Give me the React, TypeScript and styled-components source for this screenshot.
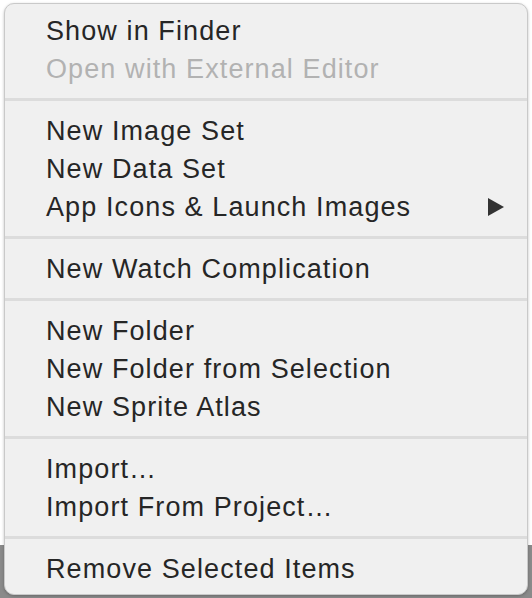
import React from "react";
import styled, { createGlobalStyle } from "styled-components";

const GlobalStyle = createGlobalStyle`
  html, body {
    margin: 0;
    padding: 0;
  }
  body {
    width: 532px;
    height: 598px;
    overflow: hidden;
    background: linear-gradient(to bottom, #ffffff 0, #ffffff 545px, #8a8a8a 545px, #8a8a8a 100%);
    font-family: "Liberation Sans", Arial, sans-serif;
  }
`;

const Page = styled.div`
  padding: 3px 4px 3px 4px;
  height: 592px;
`;

const Menu = styled.div`
  background: #f0f0f0;
  border-radius: 10px;
  border: 1px solid #c9c9c9;
  box-shadow: 0 1px 3px rgba(0, 0, 0, 0.25);
  padding: 7px 0;
  display: flex;
  flex-direction: column;
`;

const Item = styled.div<{ $disabled?: boolean }>`
  box-sizing: border-box;
  height: 38px;
  display: flex;
  align-items: center;
  justify-content: space-between;
  padding: 2px 23px 0 41px;
  font-size: 27px;
  letter-spacing: 1.1px;
  color: ${(p) => (p.$disabled ? "#b2b2b2" : "#262626")};
`;

const Separator = styled.div`
  height: 3px;
  background: #dcdcdc;
  margin: 11px 0 10px;
`;

const Arrow = styled.span`
  width: 0;
  height: 0;
  border-top: 9.5px solid transparent;
  border-bottom: 9.5px solid transparent;
  border-left: 16px solid #333333;
`;

type Entry = { label: string; disabled?: boolean; submenu?: boolean };

const groups: Entry[][] = [
  [{ label: "Show in Finder" }, { label: "Open with External Editor", disabled: true }],
  [
    { label: "New Image Set" },
    { label: "New Data Set" },
    { label: "App Icons & Launch Images", submenu: true },
  ],
  [{ label: "New Watch Complication" }],
  [
    { label: "New Folder" },
    { label: "New Folder from Selection" },
    { label: "New Sprite Atlas" },
  ],
  [{ label: "Import…" }, { label: "Import From Project…" }],
  [{ label: "Remove Selected Items" }],
];

function App() {
  return (
    <Page>
      <GlobalStyle />
      <Menu>
        {groups.map((group, gi) => (
          <React.Fragment key={gi}>
            {gi > 0 && <Separator />}
            {group.map((entry) => (
              <Item key={entry.label} $disabled={entry.disabled}>
                <span>{entry.label}</span>
                {entry.submenu && <Arrow />}
              </Item>
            ))}
          </React.Fragment>
        ))}
      </Menu>
    </Page>
  );
}

export default App;
